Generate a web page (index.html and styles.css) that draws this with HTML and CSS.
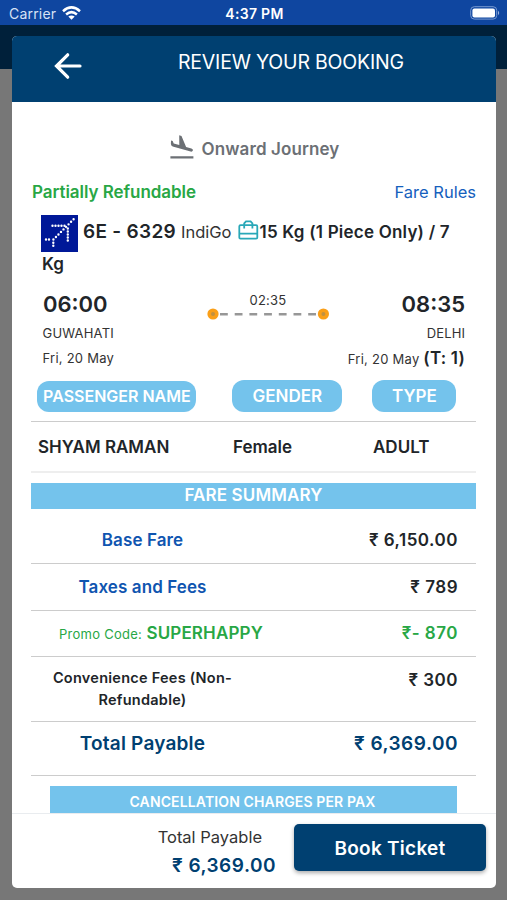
FILE: index.html
```html
<!DOCTYPE html>
<html lang="en">
<head>
<meta charset="utf-8">
<title>Review Your Booking</title>
<link rel="stylesheet" href="styles.css">
</head>
<body>
<header class="status">
  <div class="carrier"><span>Carrier</span>
    <svg width="19" height="14" viewBox="0 0 19 14"><g fill="none" stroke="#fff" stroke-width="2.5"><path d="M1 5.2Q9.5-2.4 18 5.2"/><path d="M4.1 8.5Q9.5 3.7 14.9 8.5"/></g><path d="M6.3 10.6Q9.5 8.2 12.7 10.6L9.5 13.8Z" fill="#fff"/></svg>
  </div>
  <div class="clock">4:37 PM</div>
  <svg class="battery" width="30" height="14" viewBox="0 0 30 14"><rect x=".7" y=".7" width="26" height="12.4" rx="3.6" fill="none" stroke="#7899d0"/><rect x="2.4" y="2.4" width="22.6" height="9" rx="2" fill="#fff"/><path d="M28 4.8Q30.4 7 28 9.2Z" fill="#9bb3dd"/></svg>
</header>
<div class="backdrop">
<main class="modal">
  <div class="head">
    <svg class="back" width="28" height="28" viewBox="0 0 28 28"><path d="M13.7 2.8L2.5 14L13.7 25.2M3 14H26" fill="none" stroke="#fff" stroke-width="3.2" stroke-linecap="round" stroke-linejoin="miter"/></svg>
    <h1>REVIEW YOUR BOOKING</h1>
  </div>
  <section class="content">
    <div class="journey">
      <svg width="24" height="24" viewBox="0 0 24 24"><path d="M.4 21.2H23.4V23.4H.4ZM1 5.4L2.7 5.9L3.7 8.5L9.3 10.1L9.2.2L11.5.9L16.1 12L21.4 13.5Q23.2 14.1 22.9 15.5Q22.3 17 20.6 16.5L2.7 11.5Q.9 10.9.9 9Z" fill="#6c7075"/></svg>
      <span>Onward Journey</span>
    </div>
    <div class="rules"><b>Partially Refundable</b><a>Fare Rules</a></div>
    <div class="flight">
      <div class="flight-main">
        <svg class="logo" width="37" height="37" viewBox="0 0 37 37"><path fill="#001898" d="M0 0H37V37H0Z"/><g fill="none" stroke="#fff" stroke-width="2.4" stroke-linecap="round"><path stroke-dasharray="0 3.57" d="M32.6 4.3L12.3 24.6"/><path stroke-dasharray="0 3" d="M11.5 10.7H24M26.8 13.5V26M5 24.5H10M12.3 27.8V32.5"/></g></svg>
        <b class="number">6E - 6329</b><span class="airline">IndiGo</span>
        <svg class="bag" width="21" height="20" viewBox="0 0 21 20"><g fill="none" stroke="#29a8b8" stroke-width="1.8"><rect x="1.3" y="5.2" width="18" height="13.4" rx="1.2"/><path d="M1.3 13.7H19.3M6.2 8.5V3.4L8 1.3H12.6L14.4 3.4V8.5"/></g></svg>
        <b class="allowance">15 Kg (1 Piece Only) / 7</b>
      </div>
      <b class="kg">Kg</b>
    </div>
    <div class="route">
      <div class="stop depart"><b class="time">06:00</b><span class="city">GUWAHATI</span><span class="date">Fri, 20 May</span></div>
      <div class="duration"><span>02:35</span>
        <svg width="122" height="12" viewBox="0 0 122 12"><path d="M13 6.3H109" stroke="#979797" stroke-width="2.4" stroke-dasharray="7.8 6.9"/><circle cx="6" cy="6" r="5.6" fill="#fa9f18"/><circle cx="6" cy="6" r="2" fill="#bf9143"/><circle cx="116.4" cy="6" r="5.6" fill="#fa9f18"/><circle cx="116.4" cy="6" r="2" fill="#bf9143"/></svg>
      </div>
      <div class="stop arrive"><b class="time">08:35</b><span class="city">DELHI</span><span class="date">Fri, 20 May <b>(T: 1)</b></span></div>
    </div>
    <div class="passengers labels"><span><i class="pill name">PASSENGER NAME</i></span><span><i class="pill gender">GENDER</i></span><span><i class="pill type">TYPE</i></span></div>
    <div class="passengers values"><span>SHYAM RAMAN</span><span>Female</span><span>ADULT</span></div>
    <h2 class="summary"><span>FARE SUMMARY</span></h2>
    <div class="fare base"><span class="label">Base Fare</span><span class="amount">₹ 6,150.00</span></div>
    <div class="fare tax"><span class="label">Taxes and Fees</span><span class="amount">₹ 789</span></div>
    <div class="fare promo"><span class="label"><small>Promo Code:</small> SUPERHAPPY</span><span class="amount">₹- 870</span></div>
    <div class="fare fee"><span class="label">Convenience Fees (Non-<br>Refundable)</span><span class="amount">₹ 300</span></div>
    <div class="fare total"><span class="label">Total Payable</span><span class="amount">₹ 6,369.00</span></div>
    <h2 class="cancel"><span>CANCELLATION CHARGES PER PAX</span></h2>
  </section>
  <footer class="foot">
    <div class="payable"><span>Total Payable</span><b>₹ 6,369.00</b></div>
    <button>Book Ticket</button>
  </footer>
</main>
</div>
</body>
</html>
```
FILE: styles.css
```css
* { box-sizing: border-box; }
body { margin: 0; width: 507px; height: 900px; overflow: hidden; font-family: Inter, "Liberation Sans", sans-serif; color: #212529; }
svg { display: block; flex: none; }
b, h1, h2 { font-weight: 600; margin: 0; }
span, b { white-space: nowrap; }
.status { height: 25px; background: #0f46a0; color: #fff; display: grid; grid-template-columns: 1fr auto 1fr; align-items: center; padding: 1px 7px 0 9px; }
.carrier { display: flex; gap: 6px; align-items: center; font-size: 14px; letter-spacing: .2px; color: #d7e2f5; }
.clock { font-size: 14px; font-weight: 600; letter-spacing: .3px; }
.battery { justify-self: end; }
.backdrop { height: 875px; padding: 11px 11px 12px 12px; background: linear-gradient(#00203a 44px, #777 44px); }
.modal { height: 852px; background: #fff; border-radius: 5px; overflow: hidden; display: flex; flex-direction: column; }
.head { height: 66px; flex: none; background: #004071; color: #fff; display: flex; align-items: flex-start; padding: 16px 0 0 42px; }
.back { margin-right: 96px; }
.head h1 { font-size: 19.5px; line-height: 20px; font-weight: 400; letter-spacing: -.2px; white-space: nowrap; }
.content { height: 711px; flex: none; overflow: hidden; padding: 32px 20px 0 19px; }
.journey { height: 30px; display: flex; justify-content: center; align-items: center; gap: 8px; padding-left: 2px; color: #6c7075; font-size: 17px; font-weight: 600; letter-spacing: .1px; }
.journey svg { margin-top: -5px; }
.rules { margin-top: 18px; height: 20px; line-height: 20px; padding-left: 1px; display: flex; justify-content: space-between; font-size: 17px; color: #28a745; }
.rules b { letter-spacing: -.05px; }
.rules a { color: #1560bd; font-size: 16.5px; }
.flight { margin-top: 12px; padding-left: 10px; height: 62px; }
.flight-main { display: flex; height: 37px; line-height: 36px; }
.logo { margin-top: 1px; }
.number { font-size: 19px; margin-left: 5px; letter-spacing: .3px; }
.airline { font-size: 16.5px; margin-left: 5px; color: #333; }
.bag { margin: 6px 1px 0 6px; }
.allowance { font-size: 17px; letter-spacing: .22px; }
.kg { display: block; font-size: 17px; line-height: 26px; padding-left: 1px; }
.route { margin-top: 14px; height: 86px; padding: 0 11px; display: flex; }
.stop { display: flex; flex-direction: column; }
.depart { width: 165px; flex: none; }
.depart .city, .depart .date { padding-left: .5px; }
.arrive { align-items: flex-end; margin-left: auto; }
.time { font-size: 22px; line-height: 28px; }
.depart .time { padding-left: 1px; }
.city { font-size: 13px; line-height: 20px; margin-top: 5px; letter-spacing: .2px; color: #333; }
.arrive .city { letter-spacing: .1px; }
.date { font-size: 13px; line-height: 24px; margin-top: 3px; letter-spacing: .25px; color: #333; }
.date b { font-size: 17px; letter-spacing: .2px; color: #212529; }
.duration { display: flex; flex-direction: column; align-items: center; font-size: 13px; line-height: 16px; letter-spacing: .2px; padding-top: 2px; color: #333; }
.passengers { display: grid; grid-template-columns: 195px 140px auto; padding-left: 7px; }
.labels { margin-top: 4px; height: 42px; border-bottom: 1px solid #ccc; align-items: start; padding-left: 6.4px; }
.pill { display: block; font-style: normal; font-size: 17px; font-weight: 600; color: #fff; background: #74c3ec; height: 32px; line-height: 32px; border-radius: 12px; text-align: center; }
.name { width: 159px; height: 31px; margin-top: 1px; line-height: 31px; font-size: 16px; }
.gender { width: 110px; }
.type { width: 84px; }
.values { height: 51px; border-bottom: 2px solid #eee; align-items: center; font-size: 17px; font-weight: 600; }
.summary { margin-top: 10px; height: 26px; background: #74c3ec; color: #fff; text-align: center; line-height: 25px; font-size: 17px; letter-spacing: .12px; }
.fare { display: grid; grid-template-columns: 223px 1fr; height: 47px; line-height: 46px; border-bottom: 1px solid #ccc; padding-right: 18px; text-align: center; font-size: 17px; font-weight: 600; }
.amount { text-align: right; letter-spacing: .5px; }
.base { height: 55px; line-height: 63px; }
.base .label, .tax .label { color: #0f55b0; letter-spacing: .1px; }
.promo { color: #28a745; height: 46px; line-height: 44px; }
.promo .label { padding-left: 19px; margin-right: -18px; letter-spacing: .15px; }
.promo small { font-size: 13px; font-weight: 400; letter-spacing: .25px; }
.fee { height: 65px; }
.fee .label { font-size: 14.5px; line-height: 22px; padding-top: 10px; letter-spacing: .25px; }
.total { height: 54px; line-height: 44px; font-size: 19px; color: #004071; }
.total .label { letter-spacing: .2px; }
.cancel { margin: 10px 19px 0; height: 28px; background: #74c3ec; color: #fff; text-align: center; line-height: 32px; font-size: 14px; letter-spacing: .13px; }
.cancel span { margin-right: 2px; }
.foot { height: 75px; border-top: 1px solid #e9ecef; display: flex; justify-content: flex-end; padding: 10px 10px 0 0; }
.payable { display: flex; flex-direction: column; align-items: flex-end; color: #333; font-size: 16.5px; line-height: 28px; }
.payable span { margin: -1px 14px 1px 0; }
.payable b { font-size: 19px; color: #004071; letter-spacing: .5px; }
button { margin-left: 18px; width: 192px; height: 47px; padding: 2px 0 0; border: 0; border-radius: 5px; background: #004071; color: #fff; font: 600 19px Inter, "Liberation Sans", sans-serif; letter-spacing: .25px; box-shadow: 0 2px 4px #0005; }
```
